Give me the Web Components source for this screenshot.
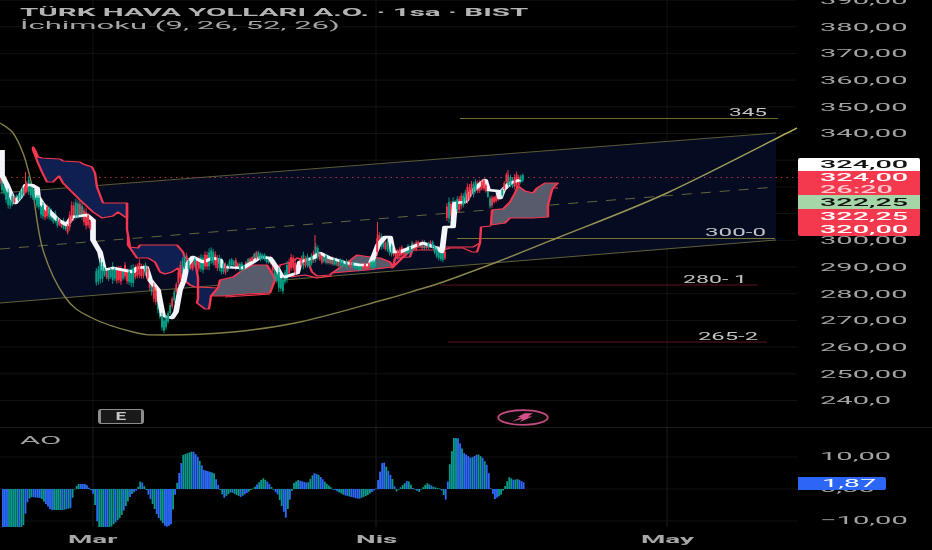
<!DOCTYPE html>
<html lang="tr">
<head>
<meta charset="utf-8">
<title>TÜRK HAVA YOLLARI</title>
<style>
html,body{margin:0;background:#000;overflow:hidden}
</style>
</head>
<body>
<tv-app>
  <tv-main-pane slot="main">
    <tv-legend>
      <tv-text slot="title" sx="2.57" weight="700" color="#b4b4b4">TÜRK HAVA YOLLARI A.O. · 1sa · BIST</tv-text>
      <tv-text slot="study" sx="2.7" color="#a6a6a6">İchimoku (9, 26, 52, 26)</tv-text>
    </tv-legend>
    <tv-price-axis></tv-price-axis>
    <tv-price-tags></tv-price-tags>
    <tv-marker kind="e"></tv-marker>
    <tv-marker kind="bolt"></tv-marker>
  </tv-main-pane>
  <tv-ao-pane slot="ao"></tv-ao-pane>
  <tv-time-axis slot="time"></tv-time-axis>
</tv-app>
<script>
const FONT = '"Roboto","Liberation Sans",sans-serif';
const SX = 2.3;

function rng(seed){let s=seed;return()=>{s=(s*1664525+1013904223)>>>0;return s/4294967296;};}
function lerp(pts,x){
  for(let i=1;i<pts.length;i++){
    if(x<=pts[i][0]){
      const a=pts[i-1],b=pts[i],t=(x-a[0])/((b[0]-a[0])||1);
      return a.slice(1).map((v,k)=>v+(b[k+1]-v)*t);
    }
  }
  return pts[pts.length-1].slice(1);
}
const PS=a=>a.map(p=>(p[0]/SX).toFixed(2)+','+p[1]).join(' ');
function smooth(p){
  let d='M'+p[0][0]+' '+p[0][1];
  for(let i=0;i<p.length-1;i++){
    const p0=p[i-1]||p[i],p1=p[i],p2=p[i+1],p3=p[i+2]||p2;
    d+=' C'+(p1[0]+(p2[0]-p0[0])/6).toFixed(1)+' '+(p1[1]+(p2[1]-p0[1])/6).toFixed(1)+' '+
       (p2[0]-(p3[0]-p1[0])/6).toFixed(1)+' '+(p2[1]-(p3[1]-p1[1])/6).toFixed(1)+' '+p2[0]+' '+p2[1];
  }
  return d;
}

class TvText extends HTMLElement{
  connectedCallback(){
    if(this.shadowRoot)return;
    const sx=this.getAttribute('sx')||'2.2',w=this.getAttribute('weight')||'400',c=this.getAttribute('color')||'#a8a8a8',fs=this.getAttribute('size')||'11.5';
    this.attachShadow({mode:'open'}).innerHTML=`<style>
      :host{display:block;height:100%;font:${w} ${fs}px ${FONT};color:${c};white-space:nowrap;line-height:1}
      span{display:inline-block;transform:scale(${sx},1);transform-origin:0 50%}
    </style><span><slot></slot></span>`;
  }
}
customElements.define('tv-text',TvText);

class TvApp extends HTMLElement{
  constructor(){
    super();
    this.attachShadow({mode:'open'}).innerHTML=`<style>
      :host{display:grid;grid-template-rows:427px 1px 99px 23px;width:932px;height:550px;background:#000;overflow:hidden;font-family:${FONT}}
      .rule{background:#1d1d1d}
    </style><slot name="main"></slot><div class="rule"></div><slot name="ao"></slot><slot name="time"></slot>`;
  }
}
customElements.define('tv-app',TvApp);

class TvLegend extends HTMLElement{
  constructor(){
    super();
    this.attachShadow({mode:'open'}).innerHTML=`<style>
      :host{position:absolute;left:20px;top:7px;display:flex;flex-direction:column;gap:1.5px;z-index:3}
    </style><slot name="title"></slot><slot name="study"></slot>`;
  }
}
customElements.define('tv-legend',TvLegend);

class TvMainPane extends HTMLElement{
  constructor(){
    super();
    const W=797,vg=[93,376,667];
    let grid='';
    for(let i=0;i<16;i++){const y=(i*26.7).toFixed(1);grid+=`<line x1="0" x2="${W}" y1="${y}" y2="${y}"/>`;}
    vg.forEach(x=>grid+=`<line x1="${x}" x2="${x}" y1="0" y2="427"/>`);

    const band=[[0,165,190],[8,185,212],[14,195,205],[22,187,200],[28,172,195],[35,185,205],[42,200,222],[50,205,222],[60,215,230],[68,222,236],[72,197,225],[80,200,222],[88,208,232],[92,228,236],
      [95,262,290],[100,255,285],[105,265,280],[112,262,285],[120,262,285],[125,262,285],[132,262,290],[138,258,280],[146,262,278],[150,270,295],[155,282,310],[158,288,315],[163,318,340],[168,310,325],[173,290,310],[180,260,285],[185,250,270],[190,255,275],[195,255,270],[205,250,275],[213,245,268],[225,262,278],[232,255,268],[243,262,275],[250,255,265],[256,250,260],[262,250,262],[270,255,265],[277,262,290],[282,275,297],[286,262,285],[292,252,275],[297,262,275],[303,250,270],[310,255,268],[316,240,265],[322,252,265],[330,255,265],[340,258,268],[350,258,270],[360,262,272],[370,262,270],[375,255,270],[378,225,255],[383,235,250],[392,240,258],[398,245,262],[405,245,258],[412,240,255],[418,238,250],[424,240,250],[432,240,250],[440,245,265],[445,250,262],[447,190,225],[452,195,222],[458,195,215],[466,185,205],[472,178,200],[478,180,195],[485,177,190],[490,195,210],[495,195,205],[502,185,200],[506,172,185],[512,175,192],[518,170,190],[524,172,182]];
    const r=rng(7);let under='',over='',run=r()<.5;
    for(let x=0;x<=524;x+=2.05){
      if(x>93&&x<94.5)continue;
      const[a,b]=lerp(band,x);const h=b-a;
      const t=a+r()*h*.3,bt=b-r()*h*.25;
      if(r()<.4)run=!run;
      const c=run?'#f5344a':'#07a088';
      const bodyT=t+(bt-t)*.18,bodyB=bt-(bt-t)*.18;
      const s=`<path stroke="${c}" d="M${x.toFixed(1)} ${t.toFixed(1)}V${bt.toFixed(1)}" stroke-width=".9"/><path stroke="${c}" d="M${x.toFixed(1)} ${bodyT.toFixed(1)}V${bodyB.toFixed(1)}" stroke-width="1.9"/>`;
      if(r()<.45&&x>8)over+=s;else under+=s;
    }
    over+=`<path stroke="#f5344a" stroke-width="1" d="M25.5 172V192M377.500 222V240M315 235V250M508 170V182"/>`;

    const white=[[2,150],[2,175],[7,185],[12,197],[15,203],[20,197],[26,185],[32,185],[37,188],[38,197],[43,205],[50,212],[58,220],[67,225],[72,217],[87,215],[93,220],[93,240],[100,252],[104,270],[113,268],[123,270],[133,272],[137,268],[146,267],[150,280],[158,290],[163,316],[172,318],[176,312],[180,290],[184,280],[187,265],[193,257],[203,262],[213,258],[220,260],[223,267],[243,268],[253,262],[260,257],[270,258],[277,268],[282,277],[285,277],[297,273],[300,262],[313,258],[320,253],[330,258],[337,260],[347,263],[360,265],[370,265],[375,253],[378,245],[385,237],[390,237],[393,252],[400,252],[412,247],[423,243],[437,248],[442,252],[445,227],[453,227],[455,203],[465,202],[470,193],[477,187],[485,180],[488,190],[498,191],[500,198],[503,190],[510,183],[520,180]];

    const blue1=[[33,147],[36,152],[38,157],[42,158],[60,159],[63,161],[80,162],[83,164],[92,167],[95,173],[97,187],[100,195],[103,203],[127,203],[127,218],[125,217],[118,212],[113,216],[102,218],[93,212],[80,200],[72,192],[63,183],[59,176],[53,182],[47,182],[42,172],[38,163],[33,150]];
    const blue2=[[128,235],[130,247],[138,248],[140,245],[177,245],[183,252],[185,258],[195,260],[198,278],[198,298],[197,303],[205,309],[209,309],[211,296],[218,288],[198,287],[195,287],[190,285],[182,278],[178,268],[172,272],[165,274],[160,272],[155,262],[148,258],[137,258],[128,245]];
    const gray1=[[211,296],[218,288],[220,280],[233,277],[240,272],[253,265],[267,265],[273,275],[275,280],[270,293],[247,294],[223,296]];
    const gray2=[[332,273],[348,262],[357,255],[370,257],[380,258],[390,262],[393,267],[367,270]];
    const blue3=[[393,267],[395,258],[410,257],[413,248],[392,268]];
    const gray3=[[491,225],[492,210],[503,209],[510,202],[515,193],[518,186],[525,191],[533,193],[537,188],[545,183],[558,183],[553,188],[552,190],[548,205],[548,217],[533,218],[510,218],[505,223]];
    const redLines=[
      [[127,203],[127,218],[127,230],[128,235]],
      [[275,280],[280,265],[292,262],[297,258],[308,262],[312,272],[317,276],[330,275],[332,273]],
      [[393,267],[413,247],[443,247],[468,247],[473,247],[480,243],[481,227],[491,226]],
      [[413,250],[443,250],[450,248],[463,248],[472,252],[477,252],[480,243]],
      [[290,277],[305,275],[317,278],[332,276]],
      [[225,297],[240,296],[270,294]],
      [[558,188],[553,188]]
    ];
    const olive=[[0,123],[13,133],[23,153],[30,177],[33,193],[43,250],[65,297],[90,317],[133,332],[163,335],[233,332],[300,322],[383,300],[417,290],[443,282],[497,262],[557,238],[667,193],[797,128]];

    this.attachShadow({mode:'open'}).innerHTML=`<style>
      :host{display:block;position:relative;overflow:hidden;background:#000;font-family:${FONT}}
      svg{position:absolute;left:0;top:0;width:932px;height:427px;filter:blur(.25px)}
      .grid line{stroke:#121212;stroke-width:1}
      .draw{fill:#c4c4c4;font:400 11.5px ${FONT}}
    </style>
    <svg viewBox="0 0 932 427">
      <defs><linearGradient id="ol" gradientUnits="userSpaceOnUse" x1="0" y1="0" x2="797" y2="0"><stop offset="0" stop-color="#857e48"/><stop offset=".45" stop-color="#827c46"/><stop offset="1" stop-color="#ada45c"/></linearGradient></defs>
      <g class="grid">${grid}</g>
      <polygon points="0,193 776,133 776,240 0,303" fill="#050c22"/>
      <line x1="0" y1="193" x2="776" y2="133" stroke="#5d5a35" stroke-width="1"/>
      <line x1="0" y1="303" x2="776" y2="240" stroke="#625f38" stroke-width="1"/>
      <line x1="0" y1="249" x2="776" y2="187" stroke="#66633c" stroke-width="1" stroke-dasharray="10 9"/>
      <line x1="0" y1="177.500" x2="800" y2="177.500" stroke="#b0303f" stroke-width="1" stroke-dasharray="1.500 4"/>
      <line x1="460" y1="118.500" x2="778" y2="118.500" stroke="#6e6a30" stroke-width="1"/>
      <line x1="457" y1="238.500" x2="775" y2="238.500" stroke="#7a7434" stroke-width="1.200"/>
      <line x1="440" y1="285" x2="758" y2="285" stroke="#5a1320" stroke-width="1.200"/>
      <line x1="448" y1="342" x2="767" y2="342" stroke="#5a1320" stroke-width="1.200"/>
      <g class="draw">
        <text x="729" y="116" textLength="38" lengthAdjust="spacingAndGlyphs">345</text>
        <text x="705" y="236" textLength="61" lengthAdjust="spacingAndGlyphs">300-0</text>
        <text x="683" y="283" textLength="64" lengthAdjust="spacingAndGlyphs">280- 1</text>
        <text x="698" y="340" textLength="60" lengthAdjust="spacingAndGlyphs">265-2</text>
      </g>
      <path d="${smooth(olive)}" fill="none" stroke="url(#ol)" stroke-width="1.400"/>
      <g transform="scale(${SX},1)" stroke="#f4364e" stroke-width="1.050" stroke-linejoin="round">
        <polygon points="${PS(blue1)}" fill="#0f1f52"/>
        <polygon points="${PS(blue2)}" fill="#0f1f52"/>
        <polygon points="${PS(blue3)}" fill="#0f1f52"/>
        <polygon points="${PS(gray1)}" fill="#585b6c"/>
        <polygon points="${PS(gray2)}" fill="#585b6c"/>
        <polygon points="${PS(gray3)}" fill="#585b6c"/>
        <g fill="none">${redLines.map(l=>`<polyline points="${PS(l)}"/>`).join('')}</g>
      </g>
      <g fill="none">${under}</g>
      <g transform="scale(${SX},1)"><polyline points="${PS(white)}" fill="none" stroke="#f4f5fb" stroke-width="2.500" stroke-linejoin="round"/></g>
      <g fill="none">${over}</g>
    </svg>
    <slot></slot>`;
  }
}
customElements.define('tv-main-pane',TvMainPane);

class TvPriceAxis extends HTMLElement{
  constructor(){
    super();
    const labels=['390,00','380,00','370,00','360,00','350,00','340,00','','','','300,00','290,00','280,00','270,00','260,00','250,00','240,0'];
    this.attachShadow({mode:'open'}).innerHTML=`<style>
      :host{position:absolute;left:820px;top:-13.400px;width:112px;display:flex;flex-direction:column;font:400 11.5px ${FONT};color:#a3a3a3}
      div{height:26.700px;display:flex;align-items:center;white-space:nowrap}
      span{display:inline-block;transform:scale(2.53,1);transform-origin:0 50%}
    </style>${labels.map(t=>`<div><span>${t}</span></div>`).join('')}`;
  }
}
customElements.define('tv-price-axis',TvPriceAxis);

class TvPriceTags extends HTMLElement{
  constructor(){
    super();
    this.attachShadow({mode:'open'}).innerHTML=`<style>
      :host{position:absolute;left:798px;top:158px;width:122px;display:flex;flex-direction:column;font:500 11.5px ${FONT};z-index:2}
      .tag{padding-left:22px;display:flex;flex-direction:column;justify-content:center;white-space:nowrap}
      span{display:block;height:13px;line-height:13px;transform:scale(2.5,1);transform-origin:0 50%}
      .w{background:#fff;color:#111;height:13px;border-radius:2px 2px 0 0}
      .r{background:#f4384e;color:#fff}
      .g{background:#a5d6a8;color:#111;height:14px}
      .r1{height:24px}.r1 span{height:12px;line-height:12px}
      .r1 .dim{color:#ffc4cc}
      .r2{height:27px;border-radius:0 0 2px 2px}
    </style>
    <div class="tag w"><span>324,00</span></div>
    <div class="tag r r1"><span>324,00</span><span class="dim">26:20</span></div>
    <div class="tag g"><span>322,25</span></div>
    <div class="tag r r2"><span>322,25</span><span>320,00</span></div>`;
  }
}
customElements.define('tv-price-tags',TvPriceTags);

class TvMarker extends HTMLElement{
  connectedCallback(){
    if(this.shadowRoot)return;
    const kind=this.getAttribute('kind');
    const root=this.attachShadow({mode:'open'});
    if(kind==='e'){
      root.innerHTML=`<style>
        :host{position:absolute;left:98px;top:409px;width:46px;height:15px;box-sizing:border-box;background:#1a1a1a;border:1px solid #8d8d8d;border-left-width:3px;border-right-width:3px;border-radius:3px;display:flex;align-items:center;justify-content:center;font:700 10px ${FONT};color:#c8c8c8}
        span{display:inline-block;transform:scale(1.9,1)}
      </style><span>E</span>`;
    }else{
      root.innerHTML=`<style>
        :host{position:absolute;left:497px;top:409px;width:52px;height:17px;display:block}
        svg{display:block;width:52px;height:17px}
      </style><svg viewBox="0 0 52 17">
        <ellipse cx="26" cy="8.500" rx="24.800" ry="7.300" fill="#0a0a0a" stroke="#c44a82" stroke-width="1.800"/>
        <path d="M15 12.800 L24 8 L20.500 8 L27.500 4.300 L36 4.300 L31 7.500 L35.500 7.500 L23 13 L25.500 9.800 Z" fill="#d5508a"/>
      </svg>`;
    }
  }
}
customElements.define('tv-marker',TvMarker);

class TvAoPane extends HTMLElement{
  constructor(){
    super();
    const pts=[[2,528],[22,528],[27,500],[30,497],[40,498],[50,510],[62,510],[70,508],[73,490],[77,484],[85,484],[90,490],[93,495],[97,527],[110,527],[120,517],[130,495],[136,490],[140,480],[145,489],[150,500],[157,517],[165,527],[170,525],[175,489],[182,455],[192,451],[197,457],[203,470],[213,473],[218,487],[223,498],[230,492],[240,497],[253,488],[262,478],[267,482],[272,489],[277,495],[285,518],[290,495],[293,483],[297,480],[307,483],[313,473],[318,475],[325,483],[332,489],[343,495],[358,499],[367,495],[375,489],[382,460],[387,470],[392,480],[395,492],[407,480],[412,488],[418,492],[426,483],[433,487],[440,489],[445,500],[448,470],[453,438],[457,438],[463,453],[470,458],[477,454],[482,458],[487,467],[490,489],[494,499],[500,495],[503,489],[508,477],[513,480],[517,479],[524,483]];
    const base=489-428;
    const r=rng(21);let bars='',prev=null;
    for(let x=2;x<=524;x+=2.05){
      const y=lerp(pts,x)[0]-428;
      const up=Math.abs(y-base)>Math.abs((prev===null?y:prev)-base);
      const pos=y<base;
      let rising=pos?up:!up;
      if(r()<.3)rising=!rising;
      const c=rising?'#0a9a8e':'#2d6bff';
      const t=Math.min(y,base),h=Math.max(.6,Math.abs(y-base));
      bars+=`<rect x="${x.toFixed(1)}" y="${t.toFixed(1)}" width="1.800" height="${h.toFixed(1)}" fill="${c}"/>`;
      prev=y;
    }
    this.attachShadow({mode:'open'}).innerHTML=`<style>
      :host{display:block;position:relative;overflow:hidden;background:#000;font:400 11.5px ${FONT}}
      svg{position:absolute;left:0;top:0;width:797px;height:99px}
      .name{position:absolute;left:20px;top:5px;color:#a3a3a3;white-space:nowrap}
      .name span{display:inline-block;transform:scale(2.7,1);transform-origin:0 50%}
      .axis span{display:inline-block;transform:scale(2.53,1);transform-origin:0 50%}
      .axis{position:absolute;left:820px;top:12px;height:100px;display:grid;grid-template-rows:32px 32px 32px;color:#a3a3a3;white-space:nowrap;line-height:32px}
      .tag{position:absolute;left:798px;top:49px;width:88px;height:13px;box-sizing:border-box;padding-left:24px;background:#2b66f6;border-radius:0 2px 2px 0;color:#fff;line-height:13px}
      .tag span{display:inline-block;transform:scale(2.5,1);transform-origin:0 50%}
    </style>
    <svg viewBox="0 0 797 99">
      <g stroke="#121212"><line x1="0" x2="797" y1="29" y2="29"/><line x1="0" x2="797" y1="61" y2="61"/><line x1="0" x2="797" y1="93" y2="93"/>
      <line x1="93" x2="93" y1="0" y2="99" stroke="#1c1c1c"/><line x1="376" x2="376" y1="0" y2="99" stroke="#1c1c1c"/><line x1="667" x2="667" y1="0" y2="99" stroke="#1c1c1c"/></g>
      ${bars}
    </svg>
    <div class="name"><span>AO</span></div>
    <div class="axis"><div><span>10,00</span></div><div><span>0,00</span></div><div><span>−10,00</span></div></div>
    <div class="tag"><span>1,87</span></div>`;
  }
}
customElements.define('tv-ao-pane',TvAoPane);

class TvTimeAxis extends HTMLElement{
  constructor(){
    super();
    this.attachShadow({mode:'open'}).innerHTML=`<style>
      :host{display:flex;align-items:flex-start;height:23px;padding-top:5px;box-sizing:border-box;font:700 11.5px ${FONT};color:#a8a8a8;white-space:nowrap}
      span{display:inline-block;transform:scale(2.42,1);transform-origin:0 50%}
      i{font-style:normal;display:block}
      .a{margin-left:68px;width:288px}.b{width:285px}
    </style><i class="a"><span>Mar</span></i><i class="b"><span>Nis</span></i><i><span>May</span></i>`;
  }
}
customElements.define('tv-time-axis',TvTimeAxis);
</script>
</body>
</html>
